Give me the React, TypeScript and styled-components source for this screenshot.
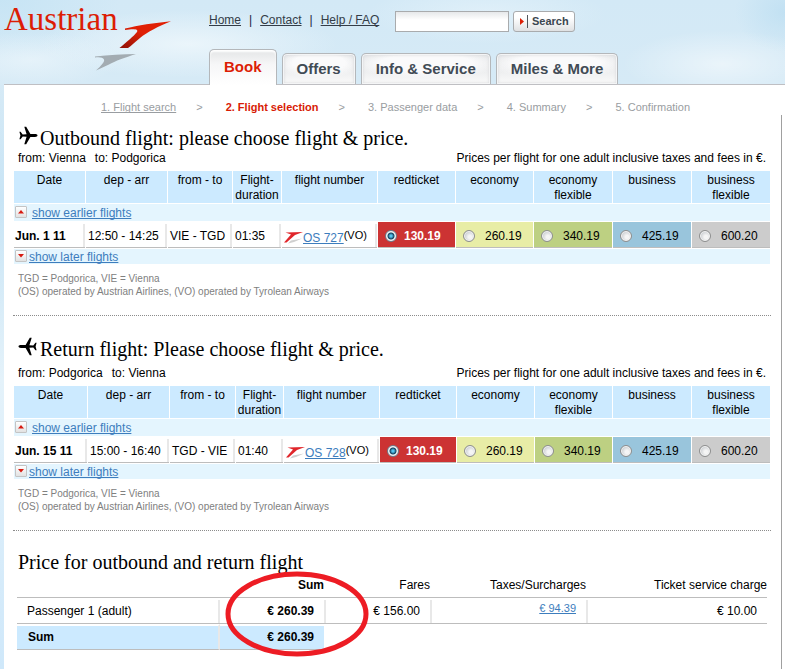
import React from "react";
import styled, { createGlobalStyle } from "styled-components";

const GlobalStyle = createGlobalStyle`
  * { box-sizing: border-box; }
  body {
    margin: 0;
    font: 12px/15px "Liberation Sans", Arial, sans-serif;
    color: #000;
    background: #d3e9f6;
    text-decoration-skip-ink: none;
  }
`;

const Page = styled.div`
  min-height: 100vh;
  padding-left: 4px;
  display: flex;
  flex-direction: column;
  background:
    radial-gradient(ellipse 100px 34px at 92% 64px, rgba(255, 255, 255, 0.5), transparent),
    radial-gradient(ellipse 50px 40px at 100% 12px, rgba(186, 221, 241, 0.7), transparent),
    radial-gradient(ellipse 120px 30px at 62% 14px, rgba(236, 246, 252, 0.5), transparent),
    radial-gradient(ellipse 150px 34px at 24% 44px, rgba(240, 248, 252, 0.8), transparent),
    radial-gradient(ellipse 90px 28px at 4% 60px, rgba(240, 248, 252, 0.6), transparent),
    radial-gradient(ellipse 120px 60px at 0 0, rgba(196, 227, 244, 0.8), transparent),
    linear-gradient(#d3e9f6, #d6eaf6 84px, #c8e4f5 200px, #e4f2fa 380px, #cfe8fa);
`;

const Header = styled.header`
  display: grid;
  grid-template-columns: 205px 1fr;
  height: 85px;
  border-bottom: 1px solid #bfbfc3;
`;

const Logo = styled.a`
  position: relative;
  color: #dc1e05;
  font: 33px/38px "Liberation Serif", "Times New Roman", serif;
  text-decoration: none;
`;

const LogoMark = styled.svg`
  position: absolute;
  left: 88px;
  top: 18px;
`;

const HeaderMain = styled.div`
  display: flex;
  flex-direction: column;
  justify-content: space-between;
  padding-top: 11px;
`;

const TopBar = styled.div`
  display: flex;
  align-items: flex-start;
`;

const TopLinks = styled.nav`
  display: flex;
  width: 186px;
  gap: 8px;
  padding-top: 2px;
  color: #202040;
`;

const TopLink = styled.a`
  color: #333c47;
`;

const SearchForm = styled.form`
  display: flex;
  gap: 4px;
`;

const SearchInput = styled.input`
  width: 114px;
  height: 21px;
  padding: 0 4px;
  border: 1px solid #a9abad;
  border-radius: 0;
  background: linear-gradient(#e6e8ea, #fff 8px);
  font: inherit;
`;

const SearchButton = styled.button`
  display: flex;
  align-items: center;
  gap: 4px;
  width: 62px;
  height: 21px;
  padding: 0 5px;
  border: 1px solid #a9abad;
  border-radius: 3px;
  background: linear-gradient(#fff 30%, #dfe1e3);
  color: #3b4650;
  font: bold 11px/15px "Liberation Sans", Arial, sans-serif;
`;

const Tabs = styled.nav`
  display: flex;
  align-items: flex-end;
  gap: 5px;
`;

const Tab = styled.a<{ $active?: boolean }>`
  height: ${(p) => (p.$active ? 36 : 31)}px;
  margin-bottom: ${(p) => (p.$active ? -1 : 0)}px;
  padding: 0 14px;
  border: 1px solid #b4b7ba;
  border-bottom: 0;
  border-radius: 5px 5px 0 0;
  background: ${(p) =>
    p.$active
      ? "linear-gradient(#e3e5e6, #f6f6f7 40%, #fff)"
      : "radial-gradient(ellipse 60% 50% at 50% 30%, #fafafb 60%, transparent), linear-gradient(#e0e2e4, #eeeff0 60%, #fafafa)"};
  box-shadow: ${(p) => (p.$active ? "inset 0 2px 2px #fff" : "inset 0 0 0 1px #f4f5f6, inset 0 0 3px 1px #d6d8da")};
  color: ${(p) => (p.$active ? "#dc1e05" : "#414b55")};
  font-size: 15px;
  font-weight: bold;
  line-height: ${(p) => (p.$active ? 34 : 30)}px;
  text-decoration: none;
`;

const Panel = styled.main`
  flex: 1;
  display: flex;
  flex-direction: column;
  background: #fff;
`;

const Steps = styled.ol`
  display: flex;
  height: 30px;
  margin: 0;
  padding: 15px 0 0 97px;
  list-style: none;
  font-size: 11px;
  color: #999da1;
`;

const Step = styled.li<{ $current?: boolean }>`
  color: ${(p) => (p.$current ? "#d81b05" : "inherit")};
  font-weight: ${(p) => (p.$current ? "bold" : "normal")};
  white-space: nowrap;
  &:not(:first-child)::before {
    content: ">";
    margin: 0 23px 0 20px;
    color: #999da1;
    font-weight: normal;
  }
  a { color: inherit; }
`;

const Content = styled.div`
  flex: 1;
  margin-right: 3px;
  padding: 0 10px 0 9px;
  border-right: 1px solid #a0a0a0;
`;

const FlightSection = styled.section<{ $first?: boolean }>`
  padding: ${(p) => (p.$first ? 11 : 21)}px 0 17px;
  border-bottom: 1px dotted #8c8c8c;
`;

const Title = styled.h2<{ $spaced?: boolean }>`
  display: flex;
  gap: 2px;
  margin: 0 0 ${(p) => (p.$spaced ? 4 : 0)}px;
  padding-left: 5px;
  font: 20px/24px "Liberation Serif", Georgia, serif;
`;

const PriceTitle = styled(Title)`
  padding-left: 1px;
`;

const Route = styled.div`
  display: flex;
  justify-content: space-between;
  padding: 0 5px 4px;
  line-height: 16px;
`;

const RouteEnds = styled.div`
  display: flex;
  gap: 9px;
`;

const FlightTable = styled.table`
  width: 100%;
  table-layout: fixed;
  border-collapse: separate;
  border-spacing: 1px;
`;

const Col = styled.col<{ $w: number }>`
  width: ${(p) => p.$w}px;
`;

const HeadCell = styled.th`
  height: 32px;
  padding: 2px 0 0;
  background: #cceaff;
  font-weight: normal;
  vertical-align: top;
`;

const MoreCell = styled.td<{ $later?: boolean }>`
  height: ${(p) => (p.$later ? 15 : 17)}px;
  padding: ${(p) => (p.$later ? 0 : 1)}px 1px 0;
  background: #e4f5fe;
  vertical-align: top;
`;

const MoreRow = styled.div<{ $later?: boolean }>`
  display: flex;
  align-items: flex-start;
  gap: ${(p) => (p.$later ? 2 : 5)}px;
  height: 15px;
  padding-top: 1px;
`;

const ArrowButton = styled.button`
  display: flex;
  align-items: center;
  justify-content: center;
  width: 12px;
  height: 12px;
  padding: 0;
  border: 1px solid #c4c4c4;
  border-radius: 1px;
  background: linear-gradient(#fff, #e2e2e2);
`;

const Link = styled.a`
  color: #3d7dbd;
`;

const Cell = styled.td`
  height: 26px;
  padding: 4px 0 0 2px;
  border-bottom: 1px solid #bdbdbd;
  background: linear-gradient(#e8e8e8, #e8e8e8) right bottom / 2px calc(100% - 2px) no-repeat;
  white-space: nowrap;
`;

const DateCell = styled(Cell)`
  padding-left: 1px;
  font-weight: bold;
`;

const FlightCell = styled(Cell)`
  padding-top: 2px;
`;

const FlightNo = styled.div`
  display: flex;
  align-items: center;
  a { padding-top: 6px; }
  span { font-size: 11px; }
`;

const FareCell = styled.td<{ $bg: string }>`
  height: 26px;
  padding: 4px 0 0 7px;
  border-bottom: 1px solid #bdbdbd;
  background: ${(p) => p.$bg};
`;

const Fare = styled.label<{ $selected?: boolean }>`
  display: flex;
  align-items: flex-start;
  gap: ${(p) => (p.$selected ? 7 : 10)}px;
  color: ${(p) => (p.$selected ? "#fff" : "#000")};
  font-weight: ${(p) => (p.$selected ? "bold" : "normal")};
`;

const Radio = styled.input`
  appearance: none;
  width: 12px;
  height: 12px;
  margin: 1px 0 0;
  border: 1px solid #8e8f8f;
  border-radius: 50%;
  background: radial-gradient(circle at 60% 60%, #f5f5f5 20%, #c4c8cc 75%);
  box-shadow: inset 0 0 0 1px #f4f4f4;
  &:checked {
    border-color: #6b7d8c;
    background: radial-gradient(circle, #56c4ee 0 1px, #12425f 3px, #e8eef2 4px);
  }
`;

const Notes = styled.p`
  margin: 7px 5px 0;
  color: #808080;
  font-size: 10px;
  line-height: 13px;
`;

const PriceSection = styled.section`
  position: relative;
  padding: 19px 4px 0;
`;

const PriceTable = styled.table`
  width: 100%;
  margin-top: 3px;
  table-layout: fixed;
  border-collapse: separate;
  border-spacing: 0;
`;

const PriceHead = styled.th<{ $strong?: boolean }>`
  height: 21px;
  padding: 0 2px 4px 0;
  border-bottom: 1px solid #bdbdbd;
  font-weight: ${(p) => (p.$strong ? "bold" : "normal")};
  text-align: right;
  white-space: nowrap;
  &:last-child { padding-right: 0; }
`;

const PriceCell = styled.td<{ $strong?: boolean; $name?: boolean; $last?: boolean }>`
  height: 26px;
  padding: 2px ${(p) => (p.$last ? 10 : 12)}px 0 10px;
  border-bottom: 1px solid #bdbdbd;
  background: ${(p) =>
    p.$last ? "none" : "linear-gradient(#e8e8e8, #e8e8e8) right bottom / 2px calc(100% - 2px) no-repeat"};
  font-weight: ${(p) => (p.$strong ? "bold" : "normal")};
  text-align: ${(p) => (p.$name ? "left" : "right")};
  white-space: nowrap;
`;

const TaxLink = styled(Link)`
  display: block;
  padding-bottom: 6px;
  font-size: 11px;
`;

const TotalCell = styled.td<{ $name?: boolean }>`
  height: 26px;
  padding: 0 10px 0 11px;
  border-top: 2px solid #fff;
  border-bottom: 1px solid #bdbdbd;
  border-right: 2px solid ${(p) => (p.$name ? "#e8e8e8" : "#fff")};
  background: #cceaff;
  background-clip: padding-box;
  font-weight: bold;
  text-align: ${(p) => (p.$name ? "left" : "right")};
`;

const Highlight = styled.svg`
  position: absolute;
  left: 211px;
  top: 39px;
  pointer-events: none;
`;

const PlaneIcon = ({ back }: { back?: boolean }) => (
  <svg width="20" height="20" viewBox="0 0 20 20" aria-hidden="true">
    <path
      transform={back ? "matrix(-1 0 0 1 20 0)" : undefined}
      d="M19.500 9.500C19.500 8.700 18.500 8.100 17 8.100H12.400L8.200 .800H6.300L8.600 8.200L4.700 8.500L2.600 5.700H1.400L2.400 9.500L1.400 13.300H2.600L4.700 10.500L8.600 10.800L6.300 18.200H8.200L12.400 10.900H17C18.500 10.900 19.500 10.300 19.500 9.500Z"
      fill="#000"
    />
  </svg>
);

const CarrierIcon = () => (
  <svg width="19" height="16" viewBox="0 0 19 16" aria-hidden="true">
    <path d="M7 12.500L18 10.500L10 14L4 15.500Z" fill="#cfcfcf" />
    <path d="M1.500 4.500L19 4L11 7L2.500 14.500H0L7 6.500Z" fill="#e0262b" />
  </svg>
);

const Arrow = ({ down }: { down?: boolean }) => (
  <svg width="6" height="4" viewBox="0 0 6 4" aria-hidden="true">
    <path d={down ? "M0 0H6L3 3.500Z" : "M0 3.500H6L3 0Z"} fill="#d61a10" />
  </svg>
);

const fareColors = ["#cc3333", "#e8eda6", "#bdd082", "#99c5dc", "#cccccc"];
const fares = ["130.19", "260.19", "340.19", "425.19", "600.20"];
const headings = [
  "Date", "dep - arr", "from - to", "Flight-duration", "flight number",
  "redticket", "economy", "economy flexible", "business", "business flexible",
];

type Flight = {
  id: string;
  title: string;
  from: string;
  to: string;
  date: string;
  time: string;
  route: string;
  duration: string;
  number: string;
  cols: number[];
};

const flights: Flight[] = [
  {
    id: "outbound", title: "Outbound flight: please choose flight & price.",
    from: "Vienna", to: "Podgorica", date: "Jun. 1 11", time: "12:50 - 14:25",
    route: "VIE - TGD", duration: "01:35", number: "OS 727",
    cols: [71, 81, 64, 48, 95, 77, 77, 78, 78, 78],
  },
  {
    id: "return", title: "Return flight: Please choose flight & price.",
    from: "Podgorica", to: "Vienna", date: "Jun. 15 11", time: "15:00 - 16:40",
    route: "TGD - VIE", duration: "01:40", number: "OS 728",
    cols: [73, 81, 65, 47, 95, 76, 77, 77, 78, 78],
  },
];

const FlightBlock = ({ flight, first }: { flight: Flight; first: boolean }) => (
  <FlightSection $first={first}>
    <Title $spaced={!first}>
      <PlaneIcon back={!first} />
      {flight.title}
    </Title>
    <Route>
      <RouteEnds>
        <span>from: {flight.from}</span>
        <span>to: {flight.to}</span>
      </RouteEnds>
      <span>Prices per flight for one adult inclusive taxes and fees in €.</span>
    </Route>
    <FlightTable>
      <colgroup>
        {flight.cols.map((w, i) => <Col key={i} $w={w} />)}
      </colgroup>
      <thead>
        <tr>{headings.map((h) => <HeadCell key={h} scope="col">{h}</HeadCell>)}</tr>
      </thead>
      <tbody>
        <tr>
          <MoreCell colSpan={10}>
            <MoreRow>
              <ArrowButton type="button" aria-label="Earlier"><Arrow /></ArrowButton>
              <Link href="#earlier">show earlier flights</Link>
            </MoreRow>
          </MoreCell>
        </tr>
        <tr>
          <DateCell>{flight.date}</DateCell>
          <Cell>{flight.time}</Cell>
          <Cell>{flight.route}</Cell>
          <Cell>{flight.duration}</Cell>
          <FlightCell>
            <FlightNo>
              <CarrierIcon />
              <Link href="#flight">{flight.number}</Link>
              <span>(VO)</span>
            </FlightNo>
          </FlightCell>
          {fares.map((fare, i) => (
            <FareCell key={fare} $bg={fareColors[i]}>
              <Fare $selected={i === 0}>
                <Radio type="radio" name={flight.id} defaultChecked={i === 0} />
                {fare}
              </Fare>
            </FareCell>
          ))}
        </tr>
        <tr>
          <MoreCell colSpan={10} $later>
            <MoreRow $later>
              <ArrowButton type="button" aria-label="Later"><Arrow down /></ArrowButton>
              <Link href="#later">show later flights</Link>
            </MoreRow>
          </MoreCell>
        </tr>
      </tbody>
    </FlightTable>
    <Notes>
      TGD = Podgorica, VIE = Vienna
      <br />
      (OS) operated by Austrian Airlines, (VO) operated by Tyrolean Airways
    </Notes>
  </FlightSection>
);

export default function App() {
  return (
    <Page>
      <GlobalStyle />
      <Header>
        <Logo href="#home">
          Austrian
          <LogoMark width="82" height="54" viewBox="0 0 82 54" aria-hidden="true">
            <defs>
              <linearGradient id="arrow" x1="1" y1="0" x2="0" y2="1">
                <stop offset="0.500" stopColor="#e02005" />
                <stop offset="1" stopColor="#8e1208" />
              </linearGradient>
            </defs>
            <path d="M33 10.500C46 7.500 62 4.800 79 3.200C66 8.500 55 14 48 20C43 24 39 28 36 30H27.500C34 24.500 42 18 45 14C47 10.500 40 11 33 12Z" fill="url(#arrow)" />
            <path d="M3 38.500C17 37 31 36.200 44 36C33 39.500 23 43 17 46.500L4 52.500C9 48 13 43.500 12 41.500C11 39.500 8 39 3 39.500Z" fill="#a3acb2" />
          </LogoMark>
        </Logo>
        <HeaderMain>
          <TopBar>
            <TopLinks>
              <TopLink href="#home">Home</TopLink>|
              <TopLink href="#contact">Contact</TopLink>|
              <TopLink href="#help">Help / FAQ</TopLink>
            </TopLinks>
            <SearchForm>
              <SearchInput type="text" aria-label="Search" />
              <SearchButton type="button">
                <svg width="9" height="13" viewBox="0 0 9 13" aria-hidden="true">
                  <path d="M1 3L5 6.500L1 10Z" fill="#dc1e05" />
                  <path d="M8 0H9V13H8Z" fill="#50565c" />
                </svg>
                Search
              </SearchButton>
            </SearchForm>
          </TopBar>
          <Tabs>
            <Tab href="#book" $active>Book</Tab>
            <Tab href="#offers">Offers</Tab>
            <Tab href="#info">Info &amp; Service</Tab>
            <Tab href="#miles">Miles &amp; More</Tab>
          </Tabs>
        </HeaderMain>
      </Header>
      <Panel>
        <Steps>
          <Step><a href="#search">1. Flight search</a></Step>
          <Step $current>2. Flight selection</Step>
          <Step>3. Passenger data</Step>
          <Step>4. Summary</Step>
          <Step>5. Confirmation</Step>
        </Steps>
        <Content>
          {flights.map((f, i) => <FlightBlock key={f.id} flight={f} first={i === 0} />)}
          <PriceSection>
            <PriceTitle>Price for outbound and return flight</PriceTitle>
            <PriceTable>
              <colgroup>
                <Col $w={203} /><Col $w={106} /><Col $w={106} /><Col $w={156} /><Col $w={179} />
              </colgroup>
              <thead>
                <tr>
                  <PriceHead />
                  <PriceHead $strong scope="col">Sum</PriceHead>
                  <PriceHead scope="col">Fares</PriceHead>
                  <PriceHead scope="col">Taxes/Surcharges</PriceHead>
                  <PriceHead scope="col">Ticket service charge</PriceHead>
                </tr>
              </thead>
              <tbody>
                <tr>
                  <PriceCell $name>Passenger 1 (adult)</PriceCell>
                  <PriceCell $strong>€ 260.39</PriceCell>
                  <PriceCell>€ 156.00</PriceCell>
                  <PriceCell><TaxLink href="#taxes">€ 94.39</TaxLink></PriceCell>
                  <PriceCell $last>€ 10.00</PriceCell>
                </tr>
                <tr>
                  <TotalCell $name>Sum</TotalCell>
                  <TotalCell>€ 260.39</TotalCell>
                </tr>
              </tbody>
            </PriceTable>
            <Highlight width="146" height="88" viewBox="0 0 146 88" aria-hidden="true">
              <ellipse cx="73" cy="44" rx="69" ry="40" fill="none" stroke="#ed1c24" strokeWidth="5" />
            </Highlight>
          </PriceSection>
        </Content>
      </Panel>
    </Page>
  );
}
